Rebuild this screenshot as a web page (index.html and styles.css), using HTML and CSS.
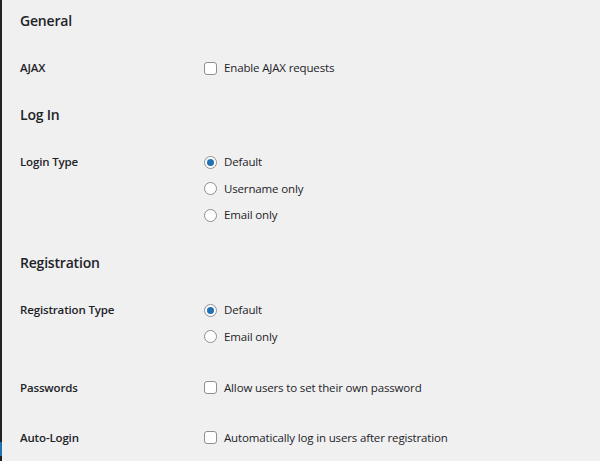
FILE: index.html
```html
<!DOCTYPE html>
<html lang="en">
<head>
<meta charset="utf-8">
<title>Settings</title>
<link rel="stylesheet" href="styles.css">
</head>
<body>
<div class="layout">
  <div class="edge"><div class="edge-current"></div></div>
  <main class="content">
    <h2 class="section-title first">General</h2>
    <div class="form-table">
      <div class="row">
        <div class="label">AJAX</div>
        <div class="field">
          <label class="option"><input type="checkbox" class="check"> Enable AJAX requests</label>
        </div>
      </div>
    </div>

    <h2 class="section-title">Log In</h2>
    <div class="form-table">
      <div class="row">
        <div class="label">Login Type</div>
        <div class="field options">
          <label class="option"><input type="radio" name="login" class="radio" checked> Default</label>
          <label class="option"><input type="radio" name="login" class="radio"> Username only</label>
          <label class="option"><input type="radio" name="login" class="radio"> Email only</label>
        </div>
      </div>
    </div>

    <h2 class="section-title">Registration</h2>
    <div class="form-table">
      <div class="row">
        <div class="label">Registration Type</div>
        <div class="field options">
          <label class="option"><input type="radio" name="reg" class="radio" checked> Default</label>
          <label class="option"><input type="radio" name="reg" class="radio"> Email only</label>
        </div>
      </div>
      <div class="row">
        <div class="label">Passwords</div>
        <div class="field">
          <label class="option"><input type="checkbox" class="check"> Allow users to set their own password</label>
        </div>
      </div>
      <div class="row">
        <div class="label">Auto-Login</div>
        <div class="field">
          <label class="option"><input type="checkbox" class="check"> Automatically log in users after registration</label>
        </div>
      </div>
    </div>
  </main>
</div>
</body>
</html>
```

FILE: styles.css
```css
html, body {
  margin: 0;
  padding: 0;
  background: #f0f0f1;
}

body {
  font-family: "Open Sans", "Noto Sans", "Liberation Sans", sans-serif;
  color: #1d2327;
  font-size: 11.5px;
  letter-spacing: -0.15px;
}

.layout {
  display: flex;
  min-height: 100vh;
}

.edge {
  width: 2px;
  flex: 0 0 2px;
  background: #1d2327;
  display: flex;
  flex-direction: column;
}

.edge-current {
  margin-top: 442px;
  height: 14px;
  background: #2271b1;
}

.content {
  flex: 1;
  padding-left: 18px;
}

.section-title {
  font-size: 14px;
  font-weight: 600;
  letter-spacing: -0.2px;
  line-height: 20px;
  margin: 13px 0 11px;
}

.section-title.first {
  margin-top: 11px;
}

.row {
  display: grid;
  grid-template-columns: 184px 1fr;
  padding: 16px 0 14px;
}

.label {
  font-weight: 600;
  line-height: 20px;
}

.options {
  display: flex;
  flex-direction: column;
  gap: 6.5px;
  margin-bottom: 1px;
}

.option {
  display: flex;
  align-items: center;
  gap: 7px;
  line-height: 20px;
}

.check,
.radio {
  appearance: none;
  -webkit-appearance: none;
  margin: 0;
  width: 13px;
  height: 13px;
  border: 1px solid #8c8f94;
  background: #fff;
  box-sizing: border-box;
  flex: 0 0 13px;
}

.check {
  border-radius: 3px;
}

.radio {
  border-radius: 50%;
  display: grid;
  place-items: center;
}

.radio:checked::before {
  content: "";
  width: 7px;
  height: 7px;
  border-radius: 50%;
  background: #2271b1;
}
```
